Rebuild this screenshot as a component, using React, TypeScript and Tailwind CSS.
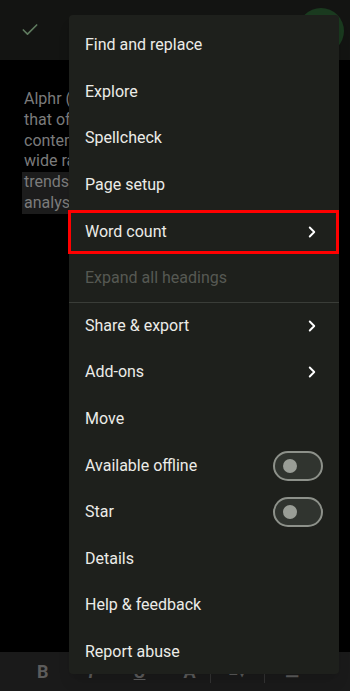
import React from 'react'
import { Check, ChevronRight } from 'lucide-react'

type Item = {
    label: string
    chevron?: boolean
    toggle?: boolean
    disabled?: boolean
    highlight?: boolean
}

const groupA: Item[] = [
    { label: 'Find and replace' },
    { label: 'Explore' },
    { label: 'Spellcheck' },
    { label: 'Page setup' },
    { label: 'Word count', chevron: true, highlight: true },
    { label: 'Expand all headings', disabled: true },
]

const groupB: Item[] = [
    { label: 'Share & export', chevron: true },
    { label: 'Add-ons', chevron: true },
    { label: 'Move' },
    { label: 'Available offline', toggle: true },
    { label: 'Star', toggle: true },
    { label: 'Details' },
    { label: 'Help & feedback' },
    { label: 'Report abuse' },
]

const Toggle = () => (
    <div className="w-[50px] h-[30px] rounded-full border-2 border-[#8d918a] bg-[#30342f] flex items-center pl-[8px]">
        <div className="w-[14px] h-[14px] rounded-full bg-[#999d96]" />
    </div>
)

const MenuRow: React.FC<{ item: Item }> = ({ item }) => (
    <div className="relative h-[46.6px] flex items-center justify-between pl-4 pr-4">
        <span className={item.disabled ? 'text-[#565953]' : 'text-[#ecece8]'}>{item.label}</span>
        {item.chevron && <ChevronRight size={18} strokeWidth={2.5} className="text-white mr-[2px]" />}
        {item.toggle && <Toggle />}
        {item.highlight && (
            <div className="absolute left-[-1px] right-0 top-[2px] bottom-[1px] border-[3px] border-[#ff0000]" />
        )}
    </div>
)

export default function App() {
    const lines = ['Alphr (', 'that of', 'conten', 'wide ra', 'trends', 'analys']

    return (
        <div
            className="relative w-[350px] h-[691px] bg-black overflow-hidden flex flex-col"
            style={{ fontFamily: 'Roboto, "Noto Sans", sans-serif' }}
        >
            {/* top app bar */}
            <div className="h-[60px] bg-[#131412] flex items-center pl-[20px] relative">
                <Check size={20} strokeWidth={2} className="text-[#5e7a5e]" />
                <div className="absolute right-[6px] top-[8px] w-[46px] h-[46px] rounded-full bg-[#1a3a1f]" />
            </div>

            {/* document body */}
            <div className="flex-1 pt-[29px] pl-[24px] text-[16px] leading-[20.8px] text-[#7b7b7b]">
                {lines.map((l, i) => (
                    <div key={l} className={i >= 4 ? 'bg-[#1c1c1c] w-[48px] -ml-[2px] pl-[2px]' : ''}>
                        {l}
                    </div>
                ))}
            </div>

            {/* bottom format toolbar */}
            <div className="h-[39px] bg-[#1a1a1a] flex items-center text-[#5c5c5c] text-[18px] font-bold">
                <span className="ml-[37px]">B</span>
                <span className="ml-[40px] italic">I</span>
                <span className="ml-[40px] underline">U</span>
                <span className="ml-[38px]">A</span>
                <div className="ml-[14px] w-px h-[22px] bg-[#333]" />
                <span className="ml-[18px] text-[16px]">≡▾</span>
                <div className="ml-[18px] w-px h-[22px] bg-[#333]" />
                <span className="ml-[20px] text-[16px]">☰</span>
            </div>

            {/* overflow menu */}
            <div className="absolute left-[69px] top-[15px] w-[270px] h-[659px] bg-[#1e201c] rounded-[4px] pt-[7px] text-[16px] shadow-lg">
                {groupA.map((it) => (
                    <MenuRow key={it.label} item={it} />
                ))}
                <div className="h-px bg-[#3a3d38]" />
                {groupB.map((it) => (
                    <MenuRow key={it.label} item={it} />
                ))}
            </div>
        </div>
    )
}
